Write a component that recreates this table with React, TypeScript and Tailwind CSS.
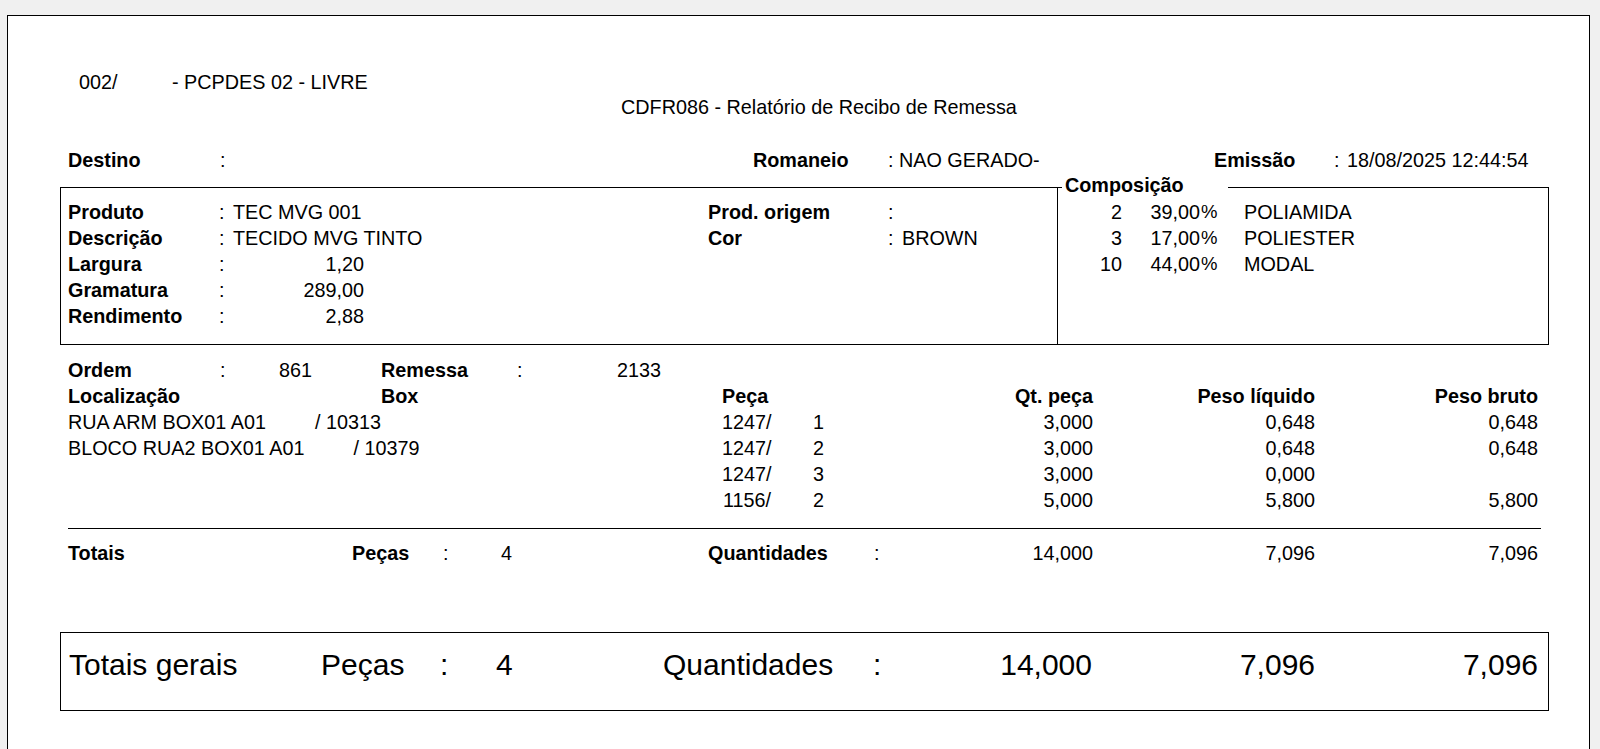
const composicao = [
  { n: '2', pct: '39,00', name: 'POLIAMIDA' },
  { n: '3', pct: '17,00', name: 'POLIESTER' },
  { n: '10', pct: '44,00', name: 'MODAL' },
]

const pecas = [
  { loc: 'RUA ARM BOX01 A01', box: '10313', lote: '1247/', num: '1', qt: '3,000', liq: '0,648', bruto: '0,648' },
  { loc: 'BLOCO RUA2 BOX01 A01', box: '10379', lote: '1247/', num: '2', qt: '3,000', liq: '0,648', bruto: '0,648' },
  { loc: '', box: '', lote: '1247/', num: '3', qt: '3,000', liq: '0,000', bruto: '' },
  { loc: '', box: '', lote: '1156/', num: '2', qt: '5,000', liq: '5,800', bruto: '5,800' },
]

export default function App() {
  return (
    <div className="h-[749px] overflow-hidden bg-[#f0f0f0] pl-[7px] pt-[15px] font-['Liberation_Sans',Arial,sans-serif] text-black">
      <div className="h-[760px] w-[1583px] border border-black bg-white text-[19.8px] leading-[26px] whitespace-pre">
        {/* cabeçalho */}
        <div className="mt-[53px] flex h-[25px] pl-[71px]">
          <span className="w-[93px]">002/</span>
          <span>- PCPDES 02 - LIVRE</span>
        </div>
        <div className="flex h-[26px] pl-[613px]">
          <span>CDFR086 - Relatório de Recibo de Remessa</span>
        </div>

        <div className="mt-[27px] flex h-[26px] pl-[60px]">
          <span className="w-[152px] font-bold">Destino</span>
          <span className="w-[533px]">:</span>
          <span className="w-[135px] font-bold">Romaneio</span>
          <span className="w-[326px]">: NAO GERADO-</span>
          <span className="w-[120px] font-bold">Emissão</span>
          <span className="w-[13px]">:</span>
          <span>18/08/2025 12:44:54</span>
        </div>

        {/* produto + composição */}
        <div className="mt-[14px] ml-[52px] flex h-[158px] w-[1489px] border border-black">
          <div className="w-[997px] border-r border-black pt-[11px] pl-[7px]">
            <div className="flex h-[26px]">
              <span className="w-[151px] font-bold">Produto</span>
              <span className="w-[14px]">:</span>
              <span className="w-[475px]">TEC MVG 001</span>
              <span className="w-[180px] font-bold">Prod. origem</span>
              <span className="w-[14px]">:</span>
            </div>
            <div className="flex h-[26px]">
              <span className="w-[151px] font-bold">Descrição</span>
              <span className="w-[14px]">:</span>
              <span className="w-[475px]">TECIDO MVG TINTO</span>
              <span className="w-[180px] font-bold">Cor</span>
              <span className="w-[14px]">:</span>
              <span>BROWN</span>
            </div>
            <div className="flex h-[26px]">
              <span className="w-[151px] font-bold">Largura</span>
              <span className="w-[14px]">:</span>
              <span className="w-[131px] text-right">1,20</span>
            </div>
            <div className="flex h-[26px]">
              <span className="w-[151px] font-bold">Gramatura</span>
              <span className="w-[14px]">:</span>
              <span className="w-[131px] text-right">289,00</span>
            </div>
            <div className="flex h-[26px]">
              <span className="w-[151px] font-bold">Rendimento</span>
              <span className="w-[14px]">:</span>
              <span className="w-[131px] text-right">2,88</span>
            </div>
          </div>
          <div className="relative flex-1 pt-[11px]">
            <span className="absolute -top-[15px] left-[4px] h-[24px] w-[166px] bg-white pl-[3px] font-bold leading-[24px]">
              Composição
            </span>
            {composicao.map((c) => (
              <div key={c.n} className="flex h-[26px]">
                <span className="w-[64px] text-right">{c.n}</span>
                <span className="w-[78px] text-right">{c.pct}</span>
                <span className="w-[44px] pl-[1px] text-[18.5px]">%</span>
                <span>{c.name}</span>
              </div>
            ))}
          </div>
        </div>

        {/* ordem / remessa */}
        <div className="mt-[12px] flex h-[26px] pl-[60px]">
          <span className="w-[152px] font-bold">Ordem</span>
          <span className="w-[14px]">:</span>
          <span className="w-[78px] text-right">861</span>
          <span className="w-[69px]" />
          <span className="w-[136px] font-bold">Remessa</span>
          <span className="w-[14px]">:</span>
          <span className="w-[130px] text-right">2133</span>
        </div>

        <div className="flex h-[26px] pl-[60px] font-bold">
          <span className="w-[313px]">Localização</span>
          <span className="w-[341px]">Box</span>
          <span className="w-[102px]">Peça</span>
          <span className="w-[269px] text-right">Qt. peça</span>
          <span className="w-[222px] text-right">Peso líquido</span>
          <span className="w-[223px] text-right">Peso bruto</span>
        </div>

        {pecas.map((p, i) => (
          <div key={i} className="flex h-[26px] pl-[60px]">
            <span className="flex w-[654px]">
              <span>{p.loc}</span>
              {p.box && <span className="ml-[49px]">/ {p.box}</span>}
            </span>
            <span className="w-[49px] text-right">{p.lote}</span>
            <span className="w-[53px] text-right">{p.num}</span>
            <span className="w-[269px] text-right">{p.qt}</span>
            <span className="w-[222px] text-right">{p.liq}</span>
            <span className="w-[223px] text-right">{p.bruto}</span>
          </div>
        ))}

        <div className="mt-[15px] ml-[60px] h-px w-[1473px] bg-black" />

        {/* totais */}
        <div className="mt-[11px] flex h-[26px] pl-[60px]">
          <span className="w-[284px] font-bold">Totais</span>
          <span className="w-[91px] font-bold">Peças</span>
          <span className="w-[14px]">:</span>
          <span className="w-[55px] text-right">4</span>
          <span className="w-[196px]" />
          <span className="w-[166px] font-bold">Quantidades</span>
          <span className="w-[14px]">:</span>
          <span className="w-[205px] text-right">14,000</span>
          <span className="w-[222px] text-right">7,096</span>
          <span className="w-[223px] text-right">7,096</span>
        </div>

        <div className="mt-[66px] ml-[52px] h-[79px] w-[1489px] border border-black pt-[14px] pl-[8px] text-[30px] leading-[36px]">
          <div className="flex">
            <span className="w-[252px]">Totais gerais</span>
            <span className="w-[119px]">Peças</span>
            <span className="w-[56px]">:</span>
            <span className="w-[167px]">4</span>
            <span className="w-[210px]">Quantidades</span>
            <span className="w-[14px]">:</span>
            <span className="w-[205px] text-right">14,000</span>
            <span className="w-[223px] text-right">7,096</span>
            <span className="w-[223px] text-right">7,096</span>
          </div>
        </div>
      </div>
    </div>
  )
}
